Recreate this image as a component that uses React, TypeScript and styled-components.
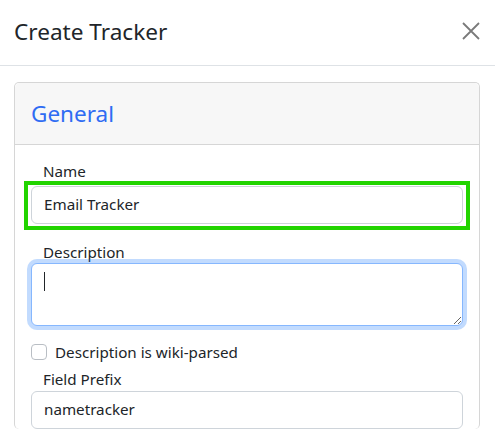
import React from "react";
import styled, { createGlobalStyle } from "styled-components";

const Global = createGlobalStyle`
  html, body { margin: 0; padding: 0; background: #fff; }
  body { font-family: "Noto Sans", "Open Sans", sans-serif; color: #212529; }
  * { box-sizing: border-box; }
`;

const Modal = styled.div`
  width: 495px;
  height: 433px;
  overflow: hidden;
  background: #fff;
`;

const Header = styled.div`
  height: 66px;
  display: flex;
  align-items: center;
  justify-content: space-between;
  padding: 0 14px 3px 14px;
  border-bottom: 1px solid #dee2e6;
`;

const Title = styled.h5`
  margin: 0;
  font-size: 22.6px;
  font-weight: 400;
  color: #212529;
`;

const Close = styled.button`
  width: 20px;
  height: 20px;
  padding: 0;
  border: 0;
  background: none;
  display: flex;
  align-items: center;
  justify-content: center;
  color: #777;
`;

const Body = styled.div`
  padding: 16px 15px 0 14px;
`;

const Card = styled.div`
  border: 1px solid #d6d6d6;
  border-radius: 5px;
  border-bottom: none;
`;

const CardHeader = styled.div`
  height: 62px;
  background: #f7f7f7;
  border-bottom: 1px solid #d6d6d6;
  border-radius: 5px 5px 0 0;
  display: flex;
  align-items: center;
  padding: 0 16px 1px 16px;
`;

const CardTitle = styled.h4`
  margin: 0;
  font-size: 22.5px;
  font-weight: 400;
  color: #2f6cf3;
`;

const CardBody = styled.div`
  padding: 16px 16px 0 16px;
`;

const Label = styled.label<{ $gap?: number }>`
  display: block;
  padding-left: 12px;
  font-size: 15.2px;
  line-height: 20px;
  margin-top: ${(p) => p.$gap ?? 0}px;
`;

const Highlight = styled.div`
  margin: 0 -7px 0 -7px;
  border: 4px solid #22d400;
  padding: 1px 3px 2px 3px;
`;

const Input = styled.input<{ $gap?: number }>`
  display: block;
  width: 100%;
  height: 38px;
  margin-top: ${(p) => p.$gap ?? 0}px;
  padding: 0 12px 2px 12px;
  font: inherit;
  font-size: 15.2px;
  color: #212529;
  border: 1px solid #ced4da;
  border-radius: 6px;
  background: #fff;
  outline: none;
`;

const TextArea = styled.textarea`
  display: block;
  width: 100%;
  height: 63px;
  margin-top: 1px;
  padding: 6px 12px;
  font: inherit;
  font-size: 15px;
  color: #212529;
  border: 1px solid #86b7fe;
  border-radius: 6px;
  box-shadow: 0 0 0 4px rgba(13, 110, 253, 0.25);
  outline: none;
  resize: vertical;
  caret-color: #212529;
`;

const CheckRow = styled.div`
  display: flex;
  align-items: center;
  gap: 8px;
  margin-top: 17px;
  height: 18px;
`;

const Box = styled.span`
  width: 16px;
  height: 16px;
  border: 1px solid #b9bec4;
  border-radius: 4px;
  background: #fff;
`;

const CheckText = styled.span`
  font-size: 15.2px;
  line-height: 18px;
`;

const Caret = styled.span`
  display: block;
  width: 1px;
  height: 19px;
  background: #212529;
  position: absolute;
  left: 13px;
  top: 9px;
`;

const AreaWrap = styled.div`
  position: relative;
`;

export default function App() {
  return (
    <>
      <Global />
      <Modal>
        <Header>
          <Title>Create Tracker</Title>
          <Close aria-label="Close">
            <svg width="18" height="18" viewBox="0 0 18 18">
              <path d="M1 1L17 17M17 1L1 17" stroke="#7a7a7a" strokeWidth="1.8" />
            </svg>
          </Close>
        </Header>
        <Body>
          <Card>
            <CardHeader>
              <CardTitle>General</CardTitle>
            </CardHeader>
            <CardBody>
              <Label>Name</Label>
              <Highlight>
                <Input defaultValue="Email Tracker" />
              </Highlight>
              <Label $gap={12}>Description</Label>
              <AreaWrap>
                <TextArea />
                <Caret />
              </AreaWrap>
              <CheckRow>
                <Box />
                <CheckText>Description is wiki-parsed</CheckText>
              </CheckRow>
              <Label $gap={8}>Field Prefix</Label>
              <Input $gap={2} defaultValue="nametracker" />
            </CardBody>
          </Card>
        </Body>
      </Modal>
    </>
  );
}
